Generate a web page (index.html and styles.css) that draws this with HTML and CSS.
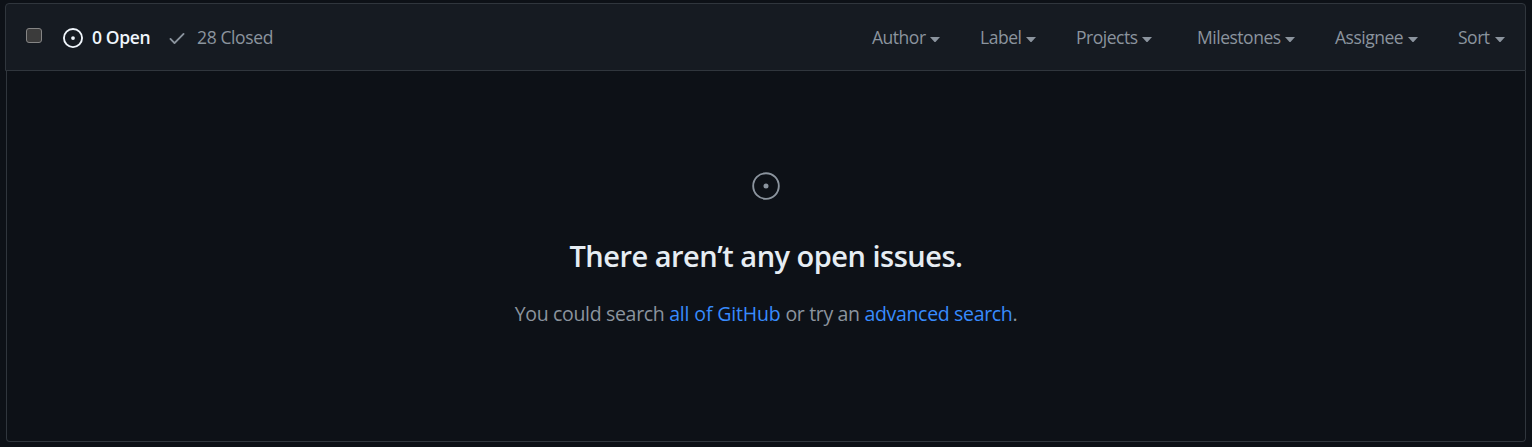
FILE: index.html
```
<!DOCTYPE html>
<html lang="en">
<head>
<meta charset="utf-8">
<title>Issues</title>
<link rel="stylesheet" href="styles.css">
</head>
<body>
<main class="issues">
  <header class="toolbar">
    <span class="checkbox" role="checkbox" aria-checked="false"></span>
    <a class="state state-open">
      <svg class="icon-open" viewBox="0 0 16 16" width="20" height="20" fill="currentColor"><path d="M8 9.5a1.5 1.5 0 1 0 0-3 1.5 1.5 0 0 0 0 3z"/><path fill-rule="evenodd" d="M8 0a8 8 0 1 0 0 16A8 8 0 0 0 8 0zM1.5 8a6.5 6.5 0 1 1 13 0 6.5 6.5 0 0 1-13 0z"/></svg>
      <span class="open-label">0 Open</span>
    </a>
    <a class="state state-closed">
      <svg class="icon-check" viewBox="0 0 16 16" width="20" height="20" fill="currentColor"><path fill-rule="evenodd" d="M13.78 4.22a.75.75 0 0 1 0 1.06l-7.25 7.25a.75.75 0 0 1-1.06 0L2.22 9.28a.75.75 0 0 1 1.06-1.06L6 10.94l6.72-6.72a.75.75 0 0 1 1.06 0z"/></svg>
      <span class="closed-label">28 Closed</span>
    </a>
    <nav class="filters">
      <a class="filter author"><span class="name">Author</span><i class="caret"></i></a>
      <a class="filter label"><span class="name">Label</span><i class="caret"></i></a>
      <a class="filter projects"><span class="name">Projects</span><i class="caret"></i></a>
      <a class="filter milestones"><span class="name">Milestones</span><i class="caret"></i></a>
      <a class="filter assignee"><span class="name">Assignee</span><i class="caret"></i></a>
      <a class="filter sort"><span class="name">Sort</span><i class="caret"></i></a>
    </nav>
  </header>
  <section class="blank">
    <svg class="blank-icon" viewBox="0 0 24 24" width="30" height="30" fill="currentColor"><path fill-rule="evenodd" d="M2.5 12a9.5 9.5 0 1 1 19 0 9.5 9.5 0 0 1-19 0zM12 1a11 11 0 1 0 0 22 11 11 0 0 0 0-22zm0 13a2 2 0 1 0 0-4 2 2 0 0 0 0 4z"/></svg>
    <h3 class="title">There aren’t any open issues.</h3>
    <p class="hint">You could search <a class="link link-all">all of GitHub</a> or try an <a class="link">advanced search</a>.</p>
  </section>
</main>
</body>
</html>
```
FILE: styles.css
```
* { box-sizing: border-box; }
body {
  margin: 0;
  height: 447px;
  padding: 3px 6px 5px 5px;
  overflow: hidden;
  background: #0d1117;
  color: #8b949e;
  font-family: "Segoe UI", "Open Sans", "Noto Sans", sans-serif;
}
.issues { height: 439px; display: flex; flex-direction: column; }
.toolbar {
  height: 68px;
  flex: none;
  display: flex;
  align-items: center;
  padding: 1px 20px 0;
  border: 1px solid #30363d;
  border-radius: 4px 4px 0 0;
  background: #161b22;
  font-size: 17.5px;
  line-height: 26px;
  white-space: nowrap;
}
.checkbox {
  width: 16px;
  height: 15px;
  margin: 0 20px 4px 0;
  border: 1px solid #858585;
  border-radius: 3px;
  background: #3b3b3b;
}
.state { display: flex; align-items: center; }
.state-open { color: #f0f6fc; font-weight: 600; margin-left: 1px; }
.open-label { width: 58px; margin: 0 0 2px 9px; letter-spacing: -0.35px; }
.state-closed { margin-left: 17px; }
.closed-label { margin: 0 0 2px 10px; letter-spacing: -0.38px; }
.filters { display: flex; gap: 40px; margin-left: auto; }
.filter { display: flex; justify-content: space-between; align-items: center; letter-spacing: -0.48px; }
.name { margin-bottom: 2px; }
.author { width: 69px; }
.label { width: 56px; margin-left: -1px; }
.projects { width: 76px; }
.milestones { width: 98px; margin-left: 5px; }
.assignee { width: 83px; }
.sort { width: 47px; }
.caret {
  width: 10px;
  height: 5px;
  flex: none;
  margin: 4px 0 0 0;
  background: currentColor;
  clip-path: polygon(0 0, 100% 0, 55% 100%, 45% 100%);
}
.author .caret { margin-right: 1px; }
.blank {
  flex: 1;
  display: flex;
  flex-direction: column;
  align-items: center;
  margin-left: 1px;
  padding-top: 100px;
  border: 1px solid #30363d;
  border-top: 0;
  border-radius: 0 0 4px 4px;
}
.blank-icon { flex: none; }
.title {
  margin: 32px 0 0;
  color: #e6edf3;
  font-size: 29px;
  line-height: 45px;
  font-weight: 600;
  letter-spacing: -0.5px;
}
.hint { margin: 21px 0 0; font-size: 19.5px; line-height: 30px; letter-spacing: -0.33px; }
.link { color: #388bfd; }
.link-all { letter-spacing: -0.15px; }
```
